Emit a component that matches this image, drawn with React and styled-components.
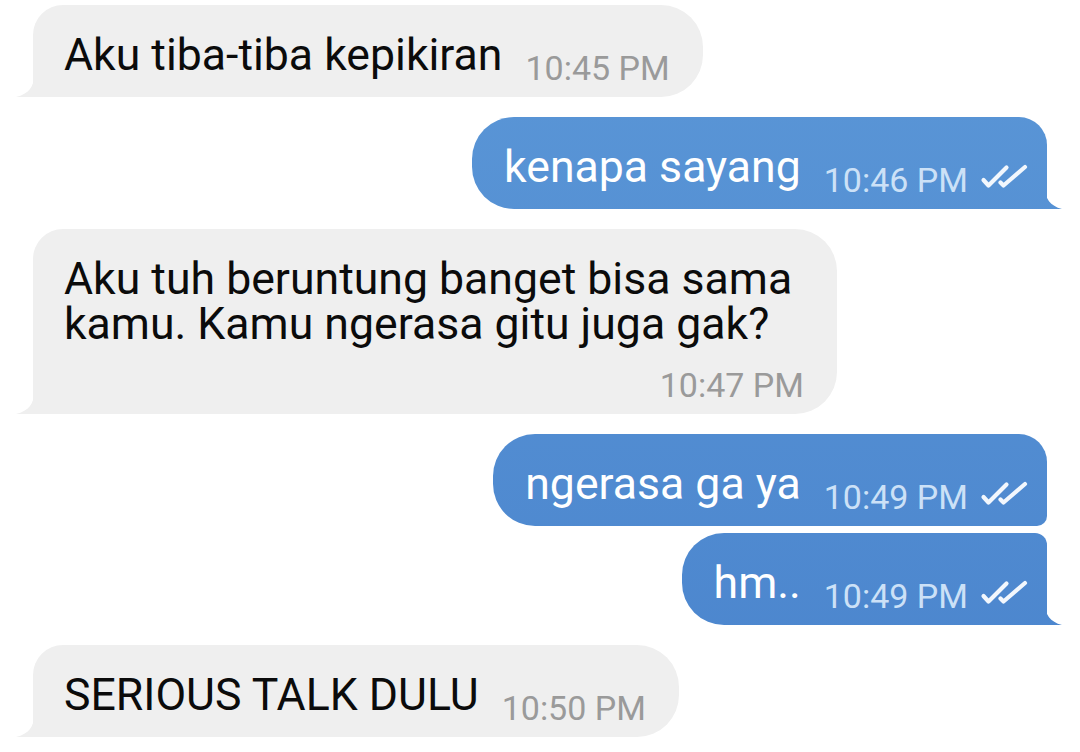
import React from "react";
import styled, { createGlobalStyle } from "styled-components";

const GlobalStyle = createGlobalStyle`
  html, body {
    margin: 0;
    background: #ffffff;
    overflow: hidden;
  }
  body {
    font-family: Roboto, "Noto Sans", Arial, sans-serif;
  }
`;

const OUT_BG = "linear-gradient(180deg, #5b97d7 0%, #4a84cd 100%) fixed";
const IN_BG = "#efefef";

const Chat = {
  Wrapper: styled.main`
    width: 1080px;
    height: 752px;
    box-sizing: border-box;
    padding: 5px 33px 0;
    display: flex;
    flex-direction: column;
  `,
  Row: styled.div`
    display: flex;
    justify-content: ${({ $out }) => ($out ? "flex-end" : "flex-start")};
    margin-top: ${({ $first, $grouped }) =>
      $first ? "0" : $grouped ? "7px" : "20px"};
  `,
  Bubble: styled.div`
    position: relative;
    box-sizing: border-box;
    max-width: 804px;
    display: flex;
    flex-wrap: wrap;
    align-items: flex-end;
    justify-content: flex-end;
    row-gap: 8px;
    padding: ${({ $out }) => ($out ? "28px 19px 9px 32px" : "28px 33px 9px 31px")};
    background: ${({ $out }) => ($out ? OUT_BG : IN_BG)};
    border-radius: ${({ $out, $grouped, $tail }) =>
      $out
        ? `42px ${$grouped ? "12px" : "28px"} ${$tail ? "0" : "10px"} 42px`
        : `${$grouped ? "12px" : "30px"} 42px 42px ${$tail ? "0" : "10px"}`};
  `,
  Tail: styled.span`
    position: absolute;
    bottom: 0;
    width: 18px;
    height: 21px;
    background: inherit;
    ${({ $out }) =>
      $out
        ? `right: -16px; clip-path: path("M0 0 C0 10 5 18 17 21 L0 21 Z");`
        : `left: -17px; clip-path: path("M18 0 C18 10 13 18 0 21 L18 21 Z");`}
  `,
  Text: styled.span`
    font-size: 44.6px;
    line-height: 45px;
    color: ${({ $out }) => ($out ? "#ffffff" : "#0b0b0b")};
    margin-bottom: 10px;
  `,
  Meta: styled.span`
    display: flex;
    align-items: center;
    gap: 12px;
    margin-left: 23px;
    font-size: 34px;
    line-height: 40px;
    white-space: nowrap;
    color: ${({ $out }) => ($out ? "#cce1f7" : "#9a9a9a")};
  `,
  Ticks: styled.svg`
    width: 48px;
    height: 26px;
    margin-bottom: 8px;
    fill: none;
    stroke: #f2f7fd;
    stroke-width: 4.2;
    stroke-linecap: round;
    stroke-linejoin: round;
  `,
};

const messages = [
  { text: "Aku tiba-tiba kepikiran", time: "10:45 PM" },
  { text: "kenapa sayang", time: "10:46 PM", out: true },
  {
    text: "Aku tuh beruntung banget bisa sama kamu. Kamu ngerasa gitu juga gak?",
    time: "10:47 PM",
  },
  { text: "ngerasa ga ya", time: "10:49 PM", out: true },
  { text: "hm..", time: "10:49 PM", out: true },
  { text: "SERIOUS TALK DULU", time: "10:50 PM" },
];

const DoubleTick = () => (
  <Chat.Ticks viewBox="0 0 48 26">
    <path d="M3.5 17 L8.5 22.5 L26.5 4.5" />
    <path d="M20.5 19.5 L23.5 22.5 L45 4" />
  </Chat.Ticks>
);

const App = () => (
  <>
    <GlobalStyle />
    <Chat.Wrapper>
      {messages.map((m, i) => {
        const prev = messages[i - 1];
        const next = messages[i + 1];
        const grouped = prev && !!prev.out === !!m.out;
        const tail = !next || !!next.out !== !!m.out;
        return (
          <Chat.Row key={i} $out={m.out} $first={i === 0} $grouped={grouped}>
            <Chat.Bubble $out={m.out} $grouped={grouped} $tail={tail}>
              {tail && <Chat.Tail $out={m.out} />}
              <Chat.Text $out={m.out}>{m.text}</Chat.Text>
              <Chat.Meta $out={m.out}>
                {m.time}
                {m.out && <DoubleTick />}
              </Chat.Meta>
            </Chat.Bubble>
          </Chat.Row>
        );
      })}
    </Chat.Wrapper>
  </>
);

export default App;
